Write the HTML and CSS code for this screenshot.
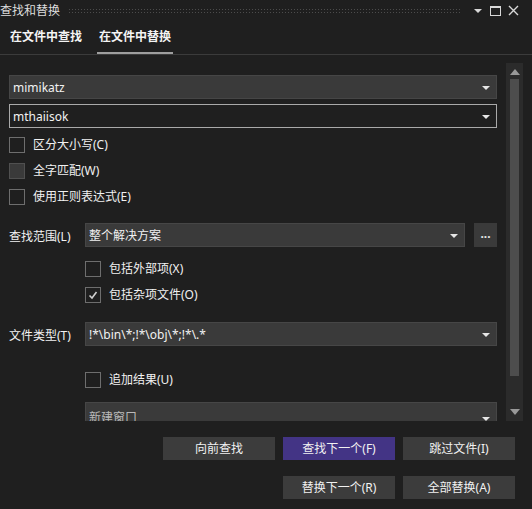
FILE: index.html
```html
<!DOCTYPE html>
<html lang="zh-CN">
<head>
  <meta charset="UTF-8">
  <title>查找和替换</title>
  <link rel="stylesheet" href="styles.css">
</head>
<body>
  <div class="window">
    <div class="titlebar">
      <span class="title">查找和替换</span>
      <span class="grip"></span>
      <span class="tb-icons">
        <svg width="10" height="6" viewBox="0 0 10 6"><path d="M1 1h8L5 5z" fill="#d8d8d8"/></svg>
        <svg width="11" height="10" viewBox="0 0 11 10"><rect x="0.5" y="0.5" width="10" height="9" fill="none" stroke="#d8d8d8"/><rect x="0" y="0" width="11" height="2" fill="#d8d8d8"/></svg>
        <svg width="11" height="11" viewBox="0 0 11 11"><path d="M1 1l9 9M10 1l-9 9" stroke="#d8d8d8" stroke-width="1.4"/></svg>
      </span>
    </div>

    <div class="tabs">
      <div class="tab">在文件中查找</div>
      <div class="tab active">在文件中替换</div>
    </div>

    <div class="main">
      <div class="content">
        <div class="combo filled"><span>mimikatz</span><i class="arrow"></i></div>
        <div class="combo focused"><span>mthaiisok</span><i class="arrow"></i></div>

        <div class="options">
          <label class="check"><span class="box"></span>区分大小写(C)</label>
          <label class="check"><span class="box hover"></span>全字匹配(W)</label>
          <label class="check"><span class="box"></span>使用正则表达式(E)</label>
        </div>

        <div class="field scope">
          <span class="label">查找范围(L)</span>
          <div class="combo filled grow"><span>整个解决方案</span><i class="arrow"></i></div>
          <div class="more"><span class="dots">...</span></div>
        </div>
        <div class="sub">
          <label class="check"><span class="box"></span>包括外部项(X)</label>
          <label class="check"><span class="box"><svg width="12" height="12" viewBox="0 0 12 12"><path d="M2.5 6.5l2.5 2.5 4.5-6" fill="none" stroke="#cfcfcf" stroke-width="1.6"/></svg></span>包括杂项文件(O)</label>
        </div>

        <div class="field types">
          <span class="label">文件类型(T)</span>
          <div class="combo filled grow"><span>!*\bin\*;!*\obj\*;!*\.*</span><i class="arrow"></i></div>
        </div>

        <div class="sub append">
          <label class="check"><span class="box"></span>追加结果(U)</label>
        </div>
        <div class="sub">
          <div class="combo filled dim tall"><span>新建窗口</span><i class="arrow"></i></div>
        </div>
      </div>
      <div class="scrollbar">
        <svg width="10" height="6" viewBox="0 0 10 6"><path d="M0 6L5 0l5 6z" fill="#999"/></svg>
        <div class="thumb"></div>
        <svg width="10" height="6" viewBox="0 0 10 6"><path d="M0 0h10L5 6z" fill="#999"/></svg>
      </div>
    </div>

    <div class="buttons">
      <div class="row">
        <button class="btn">向前查找</button>
        <button class="btn primary">查找下一个(F)</button>
        <button class="btn">跳过文件(I)</button>
      </div>
      <div class="row">
        <button class="btn">替换下一个(R)</button>
        <button class="btn">全部替换(A)</button>
      </div>
    </div>
  </div>
</body>
</html>
```

FILE: styles.css
```css
*{
  margin: 0;
  padding: 0;
  box-sizing: border-box;
}
html,body{
  background: #1f1f1f;
}
body{
  width: 532px;
  height: 509px;
  overflow: hidden;
  color: #f1f1f1;
  font-family: "Noto Sans", "Noto Sans CJK SC", sans-serif;
  font-size: 12px;
}
.titlebar{
  height: 21px;
  display: flex;
  align-items: center;
}
.title{
  color: #dcdcdc;
  line-height: 20px;
}
.grip{
  flex: 1;
  height: 5px;
  margin: 0 12px 0 8px;
  background-image: radial-gradient(circle, #4c4c4c 0.8px, transparent 1px);
  background-size: 3px 3px;
}
.tb-icons{
  display: flex;
  align-items: center;
  gap: 7px;
  padding-right: 13px;
}
.tabs{
  height: 34px;
  display: flex;
  align-items: center;
  padding-left: 8px;
  gap: 13px;
  border-bottom: 1px solid #3b3b3b;
}
.tab{
  height: 100%;
  padding: 0 2px;
  font-weight: bold;
  color: #f4f4f4;
  line-height: 32px;
  border-bottom: 2px solid transparent;
}
.tab.active{
  border-bottom-color: #9e9e9e;
}
.main{
  height: 366px;
  display: flex;
  margin-right: 9px;
}
.content{
  flex: 1;
  overflow: hidden;
  padding: 20px 9px 0 9px;
}
.combo{
  height: 24px;
  display: flex;
  align-items: center;
  padding: 1px 6px 0 3px;
  border: 1px solid #464646;
  line-height: 20px;
}
.combo span{
  flex: 1;
}
.combo.filled{
  background: #3a3a3a;
}
.combo.focused{
  margin-top: 5px;
  border-color: #a9a9a9;
  background: #1f1f1f;
}
.combo.dim span{
  color: #b9b9b9;
}
.combo.tall{
  height: 28px;
  padding-top: 4px;
}
.arrow{
  width: 0;
  height: 0;
  border-left: 4px solid transparent;
  border-right: 4px solid transparent;
  border-top: 4px solid #e6e6e6;
  margin-top: 1px;
}
.options{
  padding-top: 3px;
}
.check{
  height: 26px;
  display: flex;
  align-items: center;
  gap: 8px;
  line-height: 20px;
  padding-top: 1px;
}
.box{
  width: 16px;
  height: 16px;
  border: 1px solid #6e6e6e;
  display: flex;
  align-items: center;
  justify-content: center;
}
.box.hover{
  background: #3a3a3a;
  border-color: #505050;
}
.field{
  display: flex;
  align-items: center;
}
.label{
  width: 76px;
  padding-top: 1px;
}
.grow{
  flex: 1;
}
.scope{
  margin-top: 14px;
}
.more{
  width: 23px;
  height: 24px;
  margin-left: 9px;
  background: #3a3a3a;
  text-align: center;
  line-height: 22px;
  font-weight: bold;
  color: #e6e6e6;
}
.sub{
  padding-left: 76px;
}
.scope + .sub{
  margin-top: 8px;
}
.types{
  margin-top: 15px;
}
.append{
  margin-top: 20px;
}
.append + .sub{
  margin-top: 10px;
}
.scrollbar{
  width: 17px;
  margin-top: 8px;
  background: #2b2b2b;
  display: flex;
  flex-direction: column;
  align-items: center;
  padding: 6px 0 6px;
}
.thumb{
  width: 9px;
  flex: 1;
  background: #4d4d4d;
  margin: 4px 0 33px;
}
.buttons{
  padding: 16px 17px 0 0;
  display: flex;
  flex-direction: column;
  align-items: flex-end;
  gap: 16px;
}
.row{
  display: flex;
  gap: 8px;
}
.btn{
  width: 112px;
  height: 23px;
  border: none;
  background: #3c3c3c;
  color: #f1f1f1;
  font-family: "Noto Sans", "Noto Sans CJK SC", sans-serif;
  font-size: 12px;
  line-height: 20px;
}
.btn.primary{
  background: #433485;
}
```
